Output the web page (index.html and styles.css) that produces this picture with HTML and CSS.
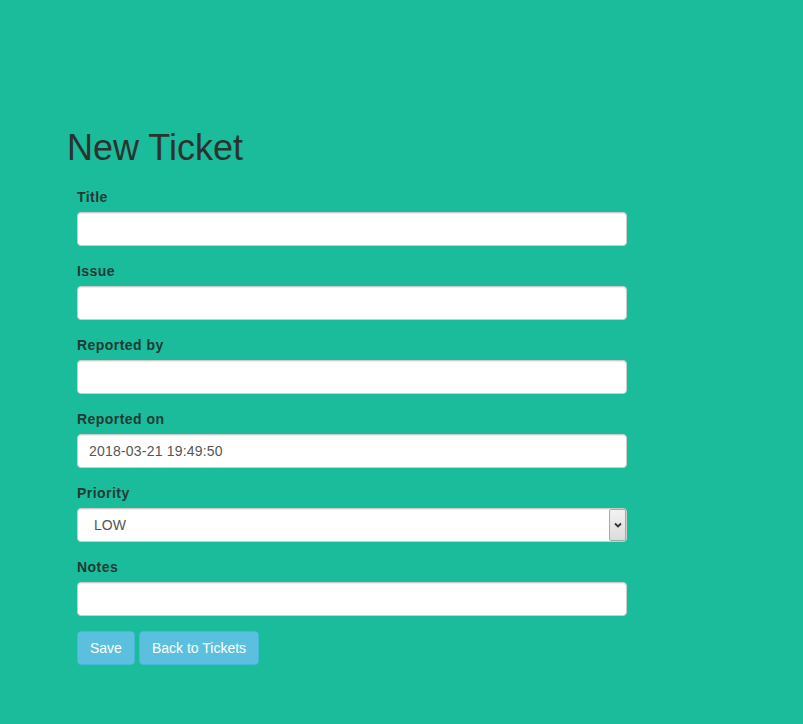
FILE: index.html
```html
<!DOCTYPE html>
<html lang="en">
<head>
<meta charset="utf-8">
<title>New Ticket</title>
<link rel="stylesheet" href="styles.css">
</head>
<body>
<div class="container">
  <h1 class="title">New Ticket</h1>
  <form class="form">
    <div class="form-group">
      <label class="label">Title</label>
      <input class="control" type="text">
    </div>
    <div class="form-group">
      <label class="label">Issue</label>
      <input class="control" type="text">
    </div>
    <div class="form-group">
      <label class="label">Reported by</label>
      <input class="control" type="text">
    </div>
    <div class="form-group">
      <label class="label">Reported on</label>
      <input class="control date" type="text" value="2018-03-21 19:49:50">
    </div>
    <div class="form-group">
      <label class="label">Priority</label>
      <div class="select-wrap">
        <select class="control select">
          <option>LOW</option>
          <option>MEDIUM</option>
          <option>HIGH</option>
        </select>
        <span class="select-arrow">
          <svg width="8" height="6" viewBox="0 0 8 6"><path d="M1 1.5 L4 4.5 L7 1.5" fill="none" stroke="#333" stroke-width="1.8"/></svg>
        </span>
      </div>
    </div>
    <div class="form-group">
      <label class="label">Notes</label>
      <input class="control" type="text">
    </div>
    <div class="actions">
      <button type="button" class="btn">Save</button>
      <button type="button" class="btn">Back to Tickets</button>
    </div>
  </form>
</div>
</body>
</html>
```
FILE: styles.css
```css
html, body {
  margin: 0;
  padding: 0;
}
body {
  background: #1bbc9b;
  font-family: "Liberation Sans", Arial, sans-serif;
  font-size: 14px;
  line-height: 20px;
  color: #333;
  min-height: 724px;
}
.container {
  padding: 108px 0 0 67px;
}
.title {
  margin: 20px 0 10px;
  font-size: 36px;
  font-weight: 500;
  line-height: 40px;
  color: #2b3330;
}
.form {
  padding: 9px 0 0 10px;
  width: 550px;
}
.form-group {
  margin-bottom: 15px;
}
.label {
  display: block;
  margin-bottom: 5px;
  font-weight: bold;
  letter-spacing: 0.45px;
  color: #1f3a34;
}
.control {
  display: block;
  box-sizing: border-box;
  width: 550px;
  height: 34px;
  padding: 6px 12px;
  font-family: "Liberation Sans", Arial, sans-serif;
  font-size: 14px;
  line-height: 20px;
  color: #555;
  background: #fff;
  border: 1px solid #ccc;
  border-radius: 4px;
  box-shadow: inset 0 1px 1px rgba(0,0,0,0.075);
  margin: 0;
}
.date {
  padding-left: 11px;
  letter-spacing: 0.2px;
}
.select-wrap {
  position: relative;
}
.select {
  appearance: none;
  -webkit-appearance: none;
  padding-left: 16px;
}
.select-arrow {
  position: absolute;
  top: 1px;
  right: 1px;
  width: 17px;
  height: 32px;
  box-sizing: border-box;
  border: 1px solid #a8a8a8;
  border-radius: 2px;
  background: linear-gradient(#f2f2f2, #dcdcdc);
  display: flex;
  align-items: center;
  justify-content: center;
  pointer-events: none;
}
.actions {
  display: flex;
  gap: 4px;
}
.btn {
  height: 34px;
  padding: 6px 12px;
  font-family: "Liberation Sans", Arial, sans-serif;
  font-size: 14px;
  line-height: 20px;
  color: #fff;
  background: #5bc0de;
  border: 1px solid #46b8da;
  border-radius: 4px;
  cursor: pointer;
}
```
